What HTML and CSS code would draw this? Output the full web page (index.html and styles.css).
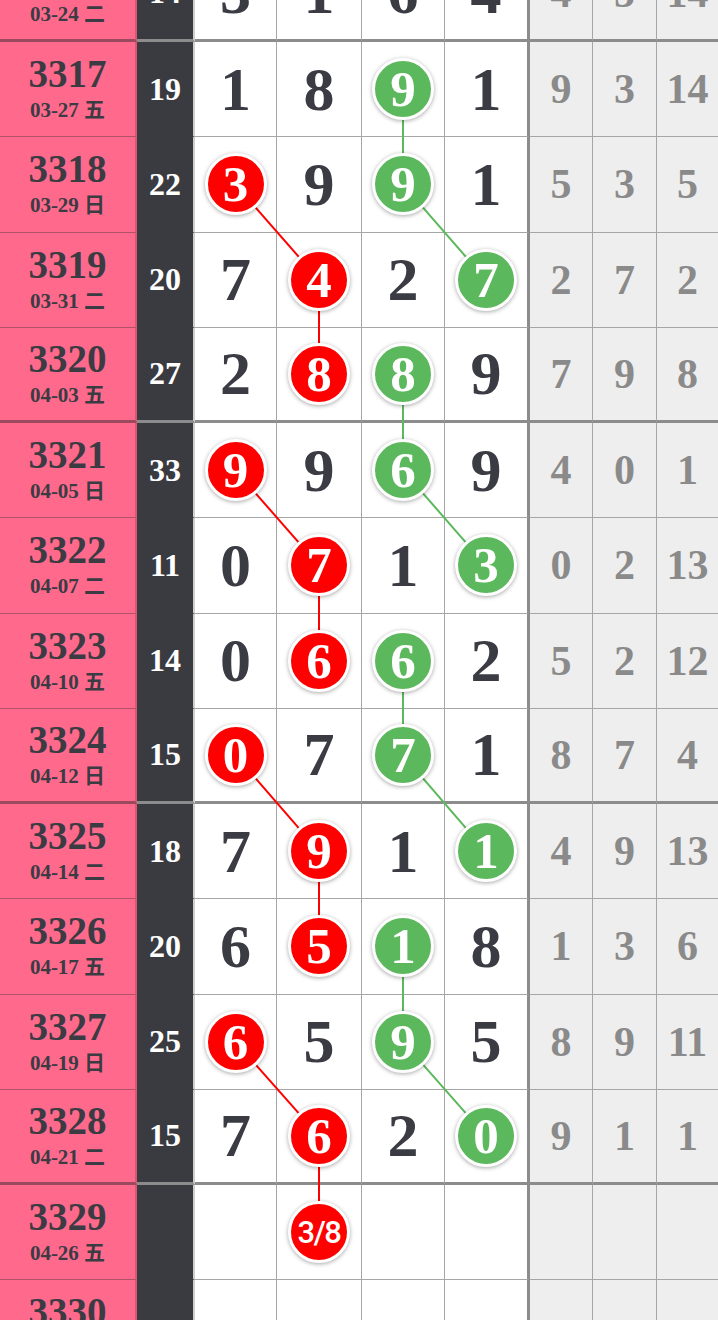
FILE: index.html
```html
<!DOCTYPE html>
<html lang="zh">
<head>
    <meta charset="UTF-8">
    <title>走势图</title>
    <link rel="stylesheet" href="styles.css">
    <script>
        var rows = [
            ["3316", "03-24 二", "14", ["3", "1", "6", "4"], ["4", "5", "14"]],
            ["3317", "03-27 五", "19", ["1", "8", "g9", "1"], ["9", "3", "14"]],
            ["3318", "03-29 日", "22", ["r3", "9", "g9", "1"], ["5", "3", "5"]],
            ["3319", "03-31 二", "20", ["7", "r4", "2", "g7"], ["2", "7", "2"]],
            ["3320", "04-03 五", "27", ["2", "r8", "g8", "9"], ["7", "9", "8"]],
            ["3321", "04-05 日", "33", ["r9", "9", "g6", "9"], ["4", "0", "1"]],
            ["3322", "04-07 二", "11", ["0", "r7", "1", "g3"], ["0", "2", "13"]],
            ["3323", "04-10 五", "14", ["0", "r6", "g6", "2"], ["5", "2", "12"]],
            ["3324", "04-12 日", "15", ["r0", "7", "g7", "1"], ["8", "7", "4"]],
            ["3325", "04-14 二", "18", ["7", "r9", "1", "g1"], ["4", "9", "13"]],
            ["3326", "04-17 五", "20", ["6", "r5", "g1", "8"], ["1", "3", "6"]],
            ["3327", "04-19 日", "25", ["r6", "5", "g9", "5"], ["8", "9", "11"]],
            ["3328", "04-21 二", "15", ["7", "r6", "2", "g0"], ["9", "1", "1"]],
            ["3329", "04-26 五", "", ["", "r3/8", "", ""], ["", "", ""]],
            ["3330", "04-28 日", "", ["", "", "", ""], ["", "", ""]]
        ];

        window.onload = function () {
            var chart = document.getElementById("chart");
            var html = "";
            for (var i = 0; i < rows.length; i++) {
                var r = rows[i];
                var p = parseInt(r[0], 10);
                html += '<div class="row' + (p % 4 == 0 ? ' end' : '') + '">';
                html += '<div class="cell issue"><span class="no">' + r[0] + '</span><span class="date">' + r[1] + '</span></div>';
                html += '<div class="cell sum">' + r[2] + '</div>';
                for (var j = 0; j < 4; j++) {
                    var v = r[3][j];
                    var cls = "cell num" + (j == 3 ? " last" : "");
                    if (v.charAt(0) == "r" || v.charAt(0) == "g") {
                        var color = v.charAt(0) == "r" ? "red" : "green";
                        var chain = color == "red" ? Math.floor((p - 3318) / 3) : Math.floor((p - 3317) / 3);
                        var txt = v.substring(1);
                        html += '<div class="' + cls + '"><span class="ball ' + color + (txt.length > 1 ? ' small' : '') +
                            '" data-chain="' + color + chain + '">' + txt + '</span></div>';
                    } else {
                        html += '<div class="' + cls + '">' + v + '</div>';
                    }
                }
                for (var k = 0; k < 3; k++) {
                    html += '<div class="cell miss">' + r[4][k] + '</div>';
                }
                html += '</div>';
            }
            chart.innerHTML = html;

            // lines between balls of the same chain
            var ns = "http://www.w3.org/2000/svg";
            var svg = document.createElementNS(ns, "svg");
            svg.setAttribute("class", "lines");
            var box = chart.getBoundingClientRect();
            var balls = chart.querySelectorAll(".ball");
            var last = {};
            for (var b = 0; b < balls.length; b++) {
                var key = balls[b].getAttribute("data-chain");
                var rc = balls[b].getBoundingClientRect();
                var pt = {x: rc.left + rc.width / 2 - box.left, y: rc.top + rc.height / 2 - box.top};
                if (last[key]) {
                    var line = document.createElementNS(ns, "line");
                    line.setAttribute("x1", last[key].x);
                    line.setAttribute("y1", last[key].y);
                    line.setAttribute("x2", pt.x);
                    line.setAttribute("y2", pt.y);
                    line.setAttribute("class", key.indexOf("red") == 0 ? "red-line" : "green-line");
                    svg.appendChild(line);
                }
                last[key] = pt;
            }
            chart.appendChild(svg);
        };
    </script>
</head>
<body>
<div class="chart" id="chart"></div>
</body>
</html>
```

FILE: styles.css
```css
* {
    margin: 0;
    padding: 0;
    box-sizing: border-box;
}
body {
    width: 718px;
    height: 1320px;
    overflow: hidden;
    background: #fff;
    font-family: "Liberation Serif", "Noto Sans CJK SC", serif;
    font-weight: bold;
    color: #3b3b44;
}
.chart {
    position: relative;
    display: grid;
    grid-template-columns: 137px 58px 82px 85px 83px 85px 63px 64px 61px;
    grid-auto-rows: 95.25px;
    margin-top: -53.25px;
}
.row {
    display: contents;
}
.cell {
    display: flex;
    align-items: center;
    justify-content: center;
    border-right: 1px solid #a6a6a6;
    border-bottom: 1px solid #a6a6a6;
}
.row.end .cell {
    border-bottom: 3px solid #8c8c8c;
}
.issue {
    flex-direction: column;
    background: #ff6a8c;
    border-right: 2px solid #d95676;
}
.row .issue {
    border-bottom-color: #b25168;
}
.row.end .issue {
    border-bottom-color: #9a4a5c;
}
.no {
    font-size: 39px;
    line-height: 36px;
}
.date {
    font-size: 21px;
    line-height: 24px;
    margin-top: 6px;
}
.sum {
    background: #3a3a41;
    color: #fff;
    font-size: 32px;
    border-right: 2px solid #cfcfcf;
}
.row .sum {
    border-bottom-color: #3a3a41;
}
.num {
    font-size: 62px;
}
.num.last {
    border-right: 3px solid #8c8c8c;
}
.miss {
    background: #eee;
    color: #8a8a8a;
    font-size: 42px;
}
.miss:last-child {
    border-right: none;
}
.ball {
    position: relative;
    z-index: 2;
    width: 62px;
    height: 62px;
    border-radius: 50%;
    border: 3px solid #fff;
    box-shadow: 0 1px 4px rgba(0, 0, 0, .35);
    color: #fff;
    display: flex;
    align-items: center;
    justify-content: center;
    font-size: 51px;
}
.ball.red {
    background: #f00;
}
.ball.green {
    background: #5cb85c;
}
.ball.small {
    font-family: Roboto, sans-serif;
    font-weight: 500;
    font-size: 31px;
    letter-spacing: -1.5px;
}
.lines {
    position: absolute;
    top: 0;
    left: 0;
    width: 100%;
    height: 100%;
    z-index: 1;
    pointer-events: none;
}
.red-line {
    stroke: #f00;
    stroke-width: 2;
}
.green-line {
    stroke: #5cb85c;
    stroke-width: 2;
}
```
